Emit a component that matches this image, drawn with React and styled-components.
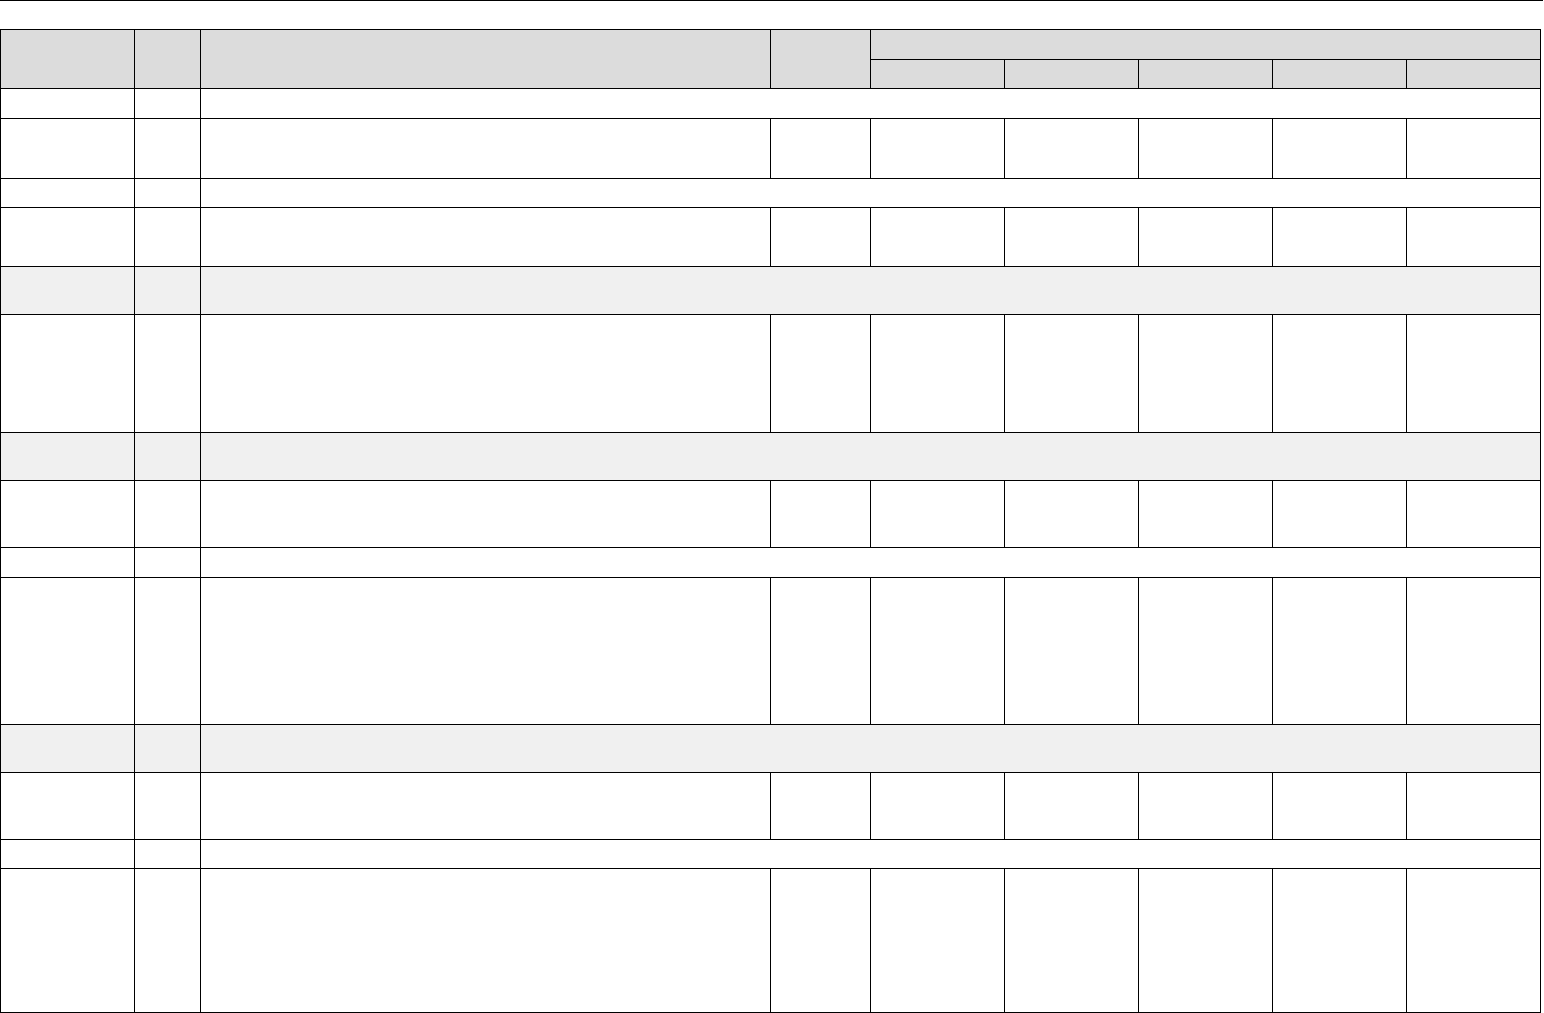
import React from 'react';
import styled, { createGlobalStyle } from 'styled-components';

const GlobalStyle = createGlobalStyle`
	html, body {
		margin: 0;
		padding: 0;
		background: #fff;
		font-family: "Liberation Sans", Arial, sans-serif;
		font-size: 13px;
		color: #000;
	}
`;

const Page = styled.div`
	width: 1544px;
	overflow: hidden;
`;

const TopRule = styled.div`
	width: 1543px;
	border-top: 1px solid #000;
	margin-bottom: 28px;
`;

const Sheet = styled.table`
	width: 1541px;
	table-layout: fixed;
	border-collapse: collapse;
	border: 1px solid #000;
`;

const HeadCell = styled.th`
	background: #dcdcdc;
	border: 1px solid #000;
	padding: 0;
	font-weight: bold;
`;

const Cell = styled.td`
	background: ${(p) => (p.$shade ? '#f0f0f0' : '#fff')};
	border: 1px solid #000;
	padding: 0 4px;
	vertical-align: top;
`;

const Row = styled.tr`
	height: ${(p) => p.$h}px;
`;

const widths = [134, 66, 570, 100, 134, 134, 134, 134, 134];

// kind: 'section' spans the columns after the first two, 'group' is the same but shaded
const rows = [
	{ kind: 'section', h: 30 },
	{ kind: 'data', h: 60 },
	{ kind: 'section', h: 29 },
	{ kind: 'data', h: 59 },
	{ kind: 'group', h: 48 },
	{ kind: 'data', h: 118 },
	{ kind: 'group', h: 48 },
	{ kind: 'data', h: 67 },
	{ kind: 'section', h: 30 },
	{ kind: 'data', h: 147 },
	{ kind: 'group', h: 48 },
	{ kind: 'data', h: 67 },
	{ kind: 'section', h: 29 },
	{ kind: 'data', h: 144 }
];

const BodyRow = ({ kind, h }) => {
	const shade = kind === 'group';
	if (kind === 'data') {
		return (
			<Row $h={h}>
				{widths.map((w, i) => <Cell key={i} />)}
			</Row>
		);
	}
	return (
		<Row $h={h}>
			<Cell $shade={shade} />
			<Cell $shade={shade} />
			<Cell $shade={shade} colSpan={7} />
		</Row>
	);
};

const App = () => (
	<React.Fragment>
		<GlobalStyle />
		<Page>
			<TopRule />
			<Sheet>
				<colgroup>
					{widths.map((w, i) => <col key={i} style={{ width: w }} />)}
				</colgroup>
				<thead>
					<Row $h={30}>
						<HeadCell rowSpan={2} />
						<HeadCell rowSpan={2} />
						<HeadCell rowSpan={2} />
						<HeadCell rowSpan={2} />
						<HeadCell colSpan={5} />
					</Row>
					<Row $h={29}>
						<HeadCell />
						<HeadCell />
						<HeadCell />
						<HeadCell />
						<HeadCell />
					</Row>
				</thead>
				<tbody>
					{rows.map((r, i) => <BodyRow key={i} {...r} />)}
				</tbody>
			</Sheet>
		</Page>
	</React.Fragment>
);

export default App;
